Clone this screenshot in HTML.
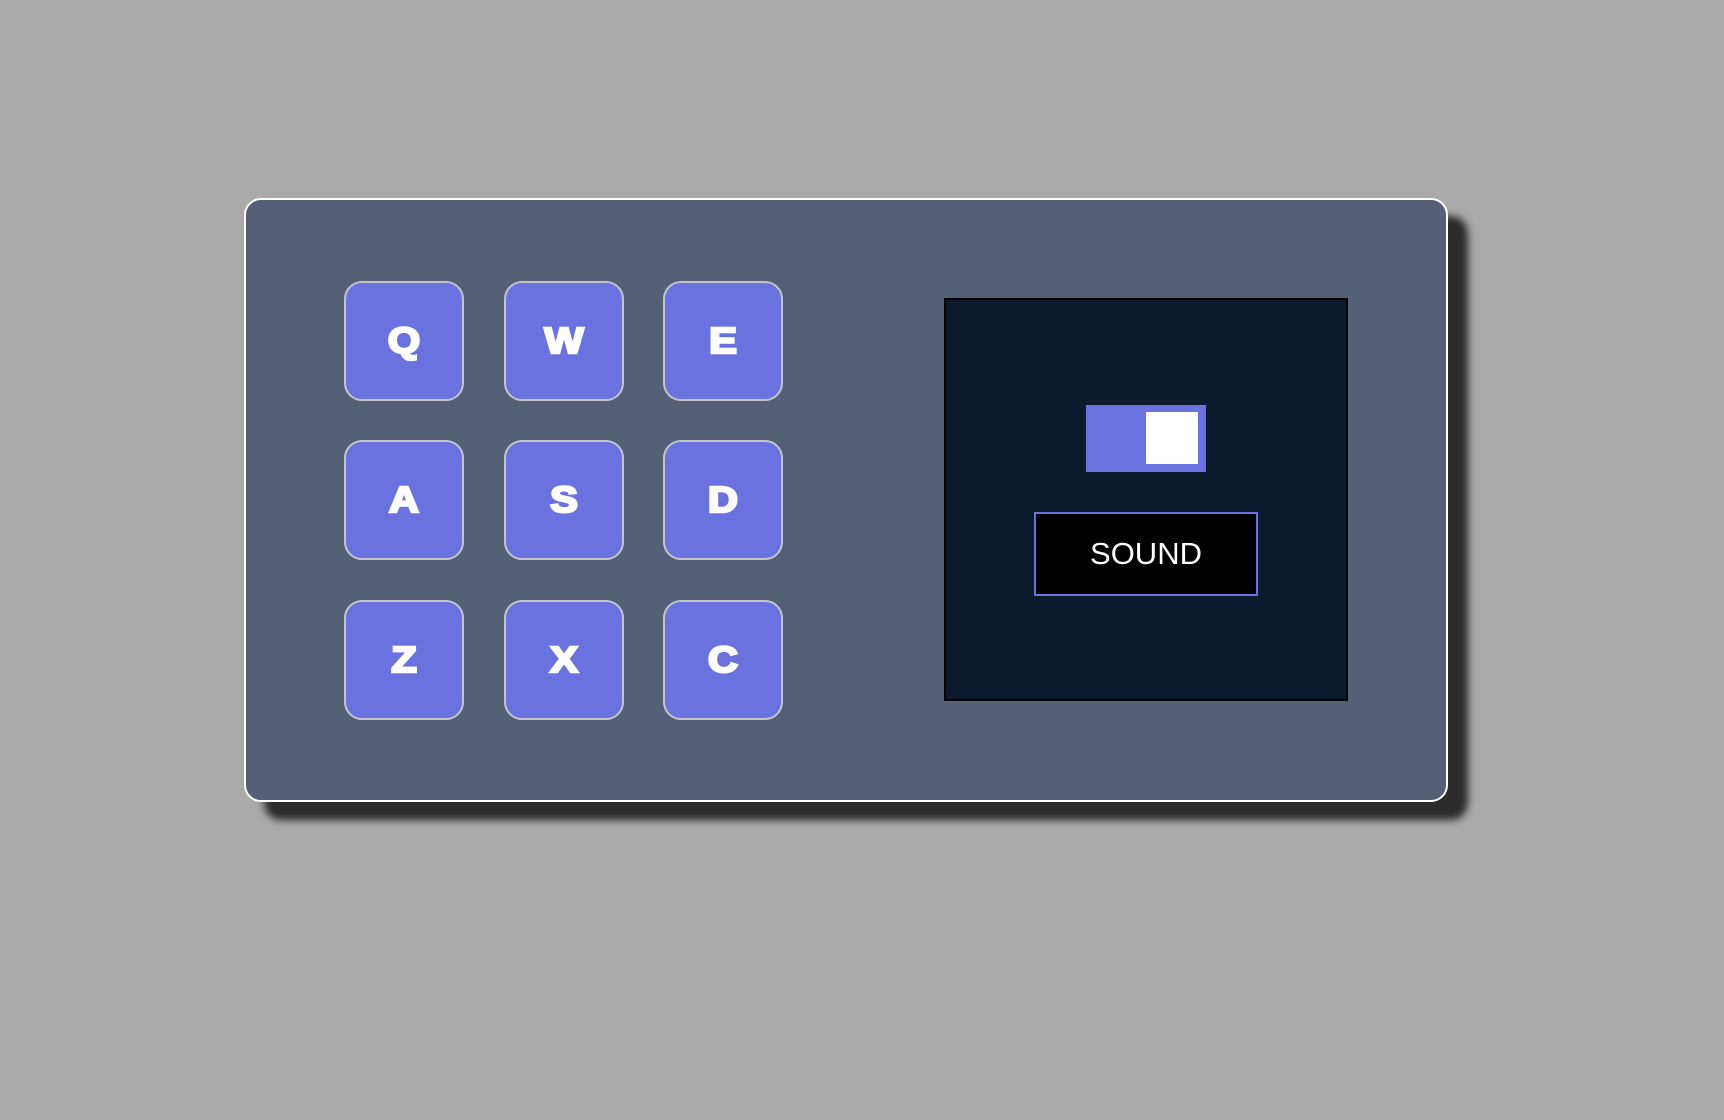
<!DOCTYPE html>
<html><head><style>
body{margin:0;width:1724px;height:1120px;background:#aaaaaa;position:relative;overflow:hidden;font-family:"Liberation Sans",sans-serif}
.panel{position:absolute;left:244px;top:198px;width:1200px;height:600px;background:#536075;border:2px solid #fff;border-radius:17px;box-shadow:20px 18px 8px #2b2b2b}
.key{position:absolute;width:116px;height:116px;background:#6a72e0;border:2px solid #c4c4cc;border-radius:18px;color:#fff;font-weight:900;font-size:36px;display:flex;align-items:center;justify-content:center;box-sizing:content-box;-webkit-text-stroke:2.5px #fff}
.key span{display:inline-block;transform:scaleX(1.15)}
.disp{position:absolute;left:944px;top:298px;width:400px;height:399px;background:#0c1a2d;border:2px solid #000}
.tog{position:absolute;left:1086px;top:405px;width:120px;height:67px;background:#6a72e0}
.knob{position:absolute;left:1146px;top:412px;width:52px;height:52px;background:#fff}
.snd{position:absolute;left:1034px;top:512px;width:220px;height:80px;background:#000;border:2px solid #6a72e0;color:#fff;font-size:31px;display:flex;align-items:center;justify-content:center}
</style></head><body>
<div class="panel"></div>
<div class="key" style="left:344px;top:281px"><span>Q</span></div>
<div class="key" style="left:504px;top:281px"><span>W</span></div>
<div class="key" style="left:663px;top:281px"><span>E</span></div>
<div class="key" style="left:344px;top:440px"><span>A</span></div>
<div class="key" style="left:504px;top:440px"><span>S</span></div>
<div class="key" style="left:663px;top:440px"><span>D</span></div>
<div class="key" style="left:344px;top:600px"><span>Z</span></div>
<div class="key" style="left:504px;top:600px"><span>X</span></div>
<div class="key" style="left:663px;top:600px"><span>C</span></div>
<div class="disp"></div>
<div class="tog"></div>
<div class="knob"></div>
<div class="snd">SOUND</div>
</body></html>
